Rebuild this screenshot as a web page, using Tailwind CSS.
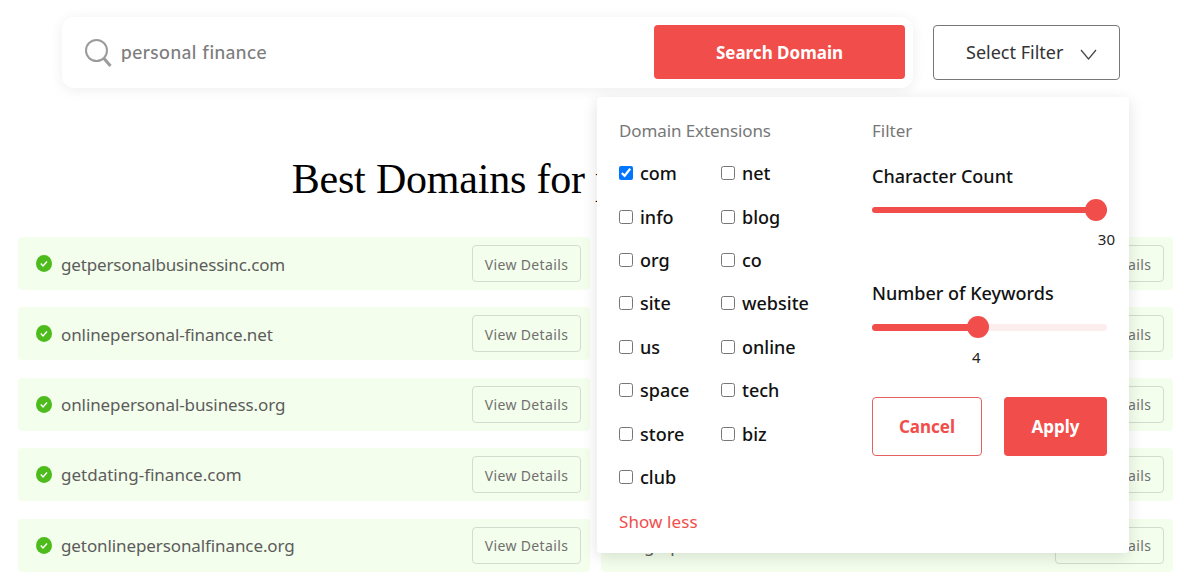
<!DOCTYPE html>
<html lang="en">
<head>
  <meta charset="UTF-8" />
  <meta name="viewport" content="width=device-width, initial-scale=1.0" />
  <title>Domain Search</title>
  <script src="https://cdn.jsdelivr.net/npm/@tailwindcss/browser@4"></script>
</head>
<body class="bg-white font-['Noto_Sans',sans-serif] text-[#222]">
  <div class="relative h-[581px] overflow-hidden">

    <!-- search row -->
    <div class="flex items-start pl-[62px] pt-[17px]">
      <div class="flex h-[71px] w-[851px] items-center rounded-xl bg-white pl-[22px] pr-[8px] shadow-[0_2px_14px_rgba(0,0,0,0.07)]">
        <svg class="h-[30px] w-[28px] shrink-0" viewBox="0 0 28 30" fill="none" stroke="#9b9b9b">
          <circle cx="12.5" cy="12.5" r="10.5" stroke-width="2" />
          <path d="M20 20.5l6.5 7.5" stroke-width="3" />
        </svg>
        <span class="ml-[9px] flex-1 font-['Lato',sans-serif] text-[19px] font-medium tracking-[0.55px] text-[#7d7d7d]">personal finance</span>
        <button class="mb-[1px] h-[54px] w-[251px] rounded bg-[#f14e4b] pt-[2px] text-[17px] font-bold text-white">Search Domain</button>
      </div>
      <button class="mt-[8px] ml-[20px] flex h-[55px] w-[187px] items-center rounded border border-[#777] pl-[32px] text-[18px] text-[#333]">
        Select Filter
        <svg class="mt-[3px] ml-[17px] h-[11px] w-[17px]" viewBox="0 0 17 11" fill="none" stroke="#444" stroke-width="1.2"><path d="M1 1l7.5 9L16 1" /></svg>
      </button>
    </div>

    <h1 class="mt-[64px] pr-[36px] text-center font-['Liberation_Serif',serif] text-[42px] leading-[54px] tracking-[-0.2px] text-black">Best Domains for personal finance</h1>

    <!-- results -->
    <div class="mt-[31px] grid grid-cols-2 gap-x-[11px] gap-y-[17.4px] pr-[23px] pl-[18px]">
      <div class="flex h-[53px] items-center rounded bg-[#f4feec] pr-[9px] pl-[18px]">
        <svg class="h-[17px] w-[16px] shrink-0" viewBox="0 0 16 17"><ellipse cx="8" cy="8.5" rx="8" ry="8.5" fill="#4dbb1c" /><path d="M4.8 8.6l2.2 2.3 4-4.4" fill="none" stroke="#fff" stroke-width="1.4" /></svg>
        <span class="ml-[9px] flex-1 pt-[2px] text-[17px] tracking-[-0.15px] text-[#5c5c5c]">getpersonalbusinessinc.com</span>
        <button class="h-[37px] w-[109px] rounded border border-[#d5dbd0] pt-[1px] text-[14px] tracking-[0.35px] text-[#707070]">View Details</button>
      </div>
      <div class="flex h-[53px] items-center rounded bg-[#f4feec] pr-[9px] pl-[43px]">
        <span class="flex-1 text-[17px] text-[#5c5c5c]">personalfinanceworld.com</span>
        <button class="h-[37px] w-[109px] rounded border border-[#d5dbd0] pt-[1px] text-[14px] tracking-[0.35px] text-[#707070]">View Details</button>
      </div>
      <div class="flex h-[53px] items-center rounded bg-[#f4feec] pr-[9px] pl-[18px]">
        <svg class="h-[17px] w-[16px] shrink-0" viewBox="0 0 16 17"><ellipse cx="8" cy="8.5" rx="8" ry="8.5" fill="#4dbb1c" /><path d="M4.8 8.6l2.2 2.3 4-4.4" fill="none" stroke="#fff" stroke-width="1.4" /></svg>
        <span class="ml-[9px] flex-1 pt-[1px] text-[17px] tracking-[-0.1px] text-[#5c5c5c]">onlinepersonal-finance.net</span>
        <button class="h-[37px] w-[109px] rounded border border-[#d5dbd0] pt-[1px] text-[14px] tracking-[0.35px] text-[#707070]">View Details</button>
      </div>
      <div class="flex h-[53px] items-center rounded bg-[#f4feec] pr-[9px] pl-[43px]">
        <span class="flex-1 text-[17px] text-[#5c5c5c]">onlinepersonalfinance.com</span>
        <button class="h-[37px] w-[109px] rounded border border-[#d5dbd0] pt-[1px] text-[14px] tracking-[0.35px] text-[#707070]">View Details</button>
      </div>
      <div class="flex h-[53px] items-center rounded bg-[#f4feec] pr-[9px] pl-[18px]">
        <svg class="h-[17px] w-[16px] shrink-0" viewBox="0 0 16 17"><ellipse cx="8" cy="8.5" rx="8" ry="8.5" fill="#4dbb1c" /><path d="M4.8 8.6l2.2 2.3 4-4.4" fill="none" stroke="#fff" stroke-width="1.4" /></svg>
        <span class="ml-[9px] flex-1 pt-[1px] text-[17px] tracking-[-0.1px] text-[#5c5c5c]">onlinepersonal-business.org</span>
        <button class="h-[37px] w-[109px] rounded border border-[#d5dbd0] pt-[1px] text-[14px] tracking-[0.35px] text-[#707070]">View Details</button>
      </div>
      <div class="flex h-[53px] items-center rounded bg-[#f4feec] pr-[9px] pl-[43px]">
        <span class="flex-1 text-[17px] text-[#5c5c5c]">getpersonal-finance.net</span>
        <button class="h-[37px] w-[109px] rounded border border-[#d5dbd0] pt-[1px] text-[14px] tracking-[0.35px] text-[#707070]">View Details</button>
      </div>
      <div class="flex h-[53px] items-center rounded bg-[#f4feec] pr-[9px] pl-[18px]">
        <svg class="h-[17px] w-[16px] shrink-0" viewBox="0 0 16 17"><ellipse cx="8" cy="8.5" rx="8" ry="8.5" fill="#4dbb1c" /><path d="M4.8 8.6l2.2 2.3 4-4.4" fill="none" stroke="#fff" stroke-width="1.4" /></svg>
        <span class="ml-[9px] flex-1 pt-[1px] text-[17px] text-[#5c5c5c]">getdating-finance.com</span>
        <button class="h-[37px] w-[109px] rounded border border-[#d5dbd0] pt-[1px] text-[14px] tracking-[0.35px] text-[#707070]">View Details</button>
      </div>
      <div class="flex h-[53px] items-center rounded bg-[#f4feec] pr-[9px] pl-[43px]">
        <span class="flex-1 text-[17px] text-[#5c5c5c]">mypersonalfinance.org</span>
        <button class="h-[37px] w-[109px] rounded border border-[#d5dbd0] pt-[1px] text-[14px] tracking-[0.35px] text-[#707070]">View Details</button>
      </div>
      <div class="flex h-[53px] items-center rounded bg-[#f4feec] pr-[9px] pl-[18px]">
        <svg class="h-[17px] w-[16px] shrink-0" viewBox="0 0 16 17"><ellipse cx="8" cy="8.5" rx="8" ry="8.5" fill="#4dbb1c" /><path d="M4.8 8.6l2.2 2.3 4-4.4" fill="none" stroke="#fff" stroke-width="1.4" /></svg>
        <span class="ml-[9px] flex-1 pt-[1px] text-[17px] tracking-[-0.1px] text-[#5c5c5c]">getonlinepersonalfinance.org</span>
        <button class="h-[37px] w-[109px] rounded border border-[#d5dbd0] pt-[1px] text-[14px] tracking-[0.35px] text-[#707070]">View Details</button>
      </div>
      <div class="flex h-[53px] items-center rounded bg-[#f4feec] pr-[9px] pl-[43px]">
        <span class="flex-1 pt-[1px] text-[17px] text-[#5c5c5c]">getpersonalfinance.com</span>
        <button class="h-[37px] w-[109px] rounded border border-[#d5dbd0] pt-[1px] text-[14px] tracking-[0.35px] text-[#707070]">View Details</button>
      </div>
    </div>

    <!-- filter popup -->
    <div class="absolute top-[97px] left-[597px] flex h-[456px] w-[532px] rounded bg-white pt-[22px] pl-[22px] shadow-[0_4px_16px_rgba(0,0,0,0.12)]">
      <div class="w-[253px]">
        <p class="text-[17px] leading-[24px] tracking-[-0.1px] text-[#777]">Domain Extensions</p>
        <div class="mt-[18.3px] grid auto-rows-[43.4px] grid-cols-[102px_1fr] text-[18px] leading-[24px] font-medium text-[#111]">
          <label class="flex h-[24px] items-center gap-[7px]"><input type="checkbox" checked class="h-[14px] w-[14px]" />com</label>
          <label class="flex h-[24px] items-center gap-[7px]"><input type="checkbox" class="h-[14px] w-[14px]" />net</label>
          <label class="flex h-[24px] items-center gap-[7px]"><input type="checkbox" class="h-[14px] w-[14px]" />info</label>
          <label class="flex h-[24px] items-center gap-[7px]"><input type="checkbox" class="h-[14px] w-[14px]" />blog</label>
          <label class="flex h-[24px] items-center gap-[7px]"><input type="checkbox" class="h-[14px] w-[14px]" />org</label>
          <label class="flex h-[24px] items-center gap-[7px]"><input type="checkbox" class="h-[14px] w-[14px]" />co</label>
          <label class="flex h-[24px] items-center gap-[7px]"><input type="checkbox" class="h-[14px] w-[14px]" />site</label>
          <label class="flex h-[24px] items-center gap-[7px]"><input type="checkbox" class="h-[14px] w-[14px]" />website</label>
          <label class="flex h-[24px] items-center gap-[7px]"><input type="checkbox" class="h-[14px] w-[14px]" />us</label>
          <label class="flex h-[24px] items-center gap-[7px]"><input type="checkbox" class="h-[14px] w-[14px]" />online</label>
          <label class="flex h-[24px] items-center gap-[7px]"><input type="checkbox" class="h-[14px] w-[14px]" />space</label>
          <label class="flex h-[24px] items-center gap-[7px]"><input type="checkbox" class="h-[14px] w-[14px]" />tech</label>
          <label class="flex h-[24px] items-center gap-[7px]"><input type="checkbox" class="h-[14px] w-[14px]" />store</label>
          <label class="flex h-[24px] items-center gap-[7px]"><input type="checkbox" class="h-[14px] w-[14px]" />biz</label>
          <label class="flex h-[24px] items-center gap-[7px]"><input type="checkbox" class="h-[14px] w-[14px]" />club</label>
        </div>
        <p class="mt-[2px] text-[17px] leading-[24px] tracking-[0.1px] text-[#f14e4b]">Show less</p>
      </div>

      <div class="w-[235px]">
        <p class="text-[17px] leading-[24px] text-[#777]">Filter</p>
        <p class="mt-[21px] text-[18px] leading-[24px] font-medium text-[#111]">Character Count</p>
        <div class="relative mt-[19px] h-[6px] rounded-full bg-[#f14e4b]">
          <span class="absolute top-[-8px] right-0 h-[22px] w-[22px] rounded-full bg-[#f14e4b]"></span>
        </div>
        <p class="mt-[16px] mr-[-8px] text-right text-[15px] leading-[20px] text-[#222]">30</p>
        <p class="mt-[32px] text-[18px] leading-[24px] font-medium text-[#111]">Number of Keywords</p>
        <div class="relative mt-[19px] h-[7px] rounded-full bg-[#fdeeee]">
          <div class="h-[7px] w-[106px] rounded-full bg-[#f14e4b]"></div>
          <span class="absolute top-[-8px] left-[95px] h-[22px] w-[22px] rounded-full bg-[#f14e4b]"></span>
        </div>
        <p class="mt-[16px] ml-[100px] text-[15px] leading-[20px] text-[#222]">4</p>
        <div class="mt-[30px] flex justify-between">
          <button class="h-[59px] w-[110px] rounded border border-[#e5605e] pt-[1px] text-[17px] font-bold text-[#f14e4b]">Cancel</button>
          <button class="h-[59px] w-[103px] rounded bg-[#f14e4b] pt-[1px] text-[17px] font-bold text-white">Apply</button>
        </div>
      </div>
    </div>
  </div>
</body>
</html>
